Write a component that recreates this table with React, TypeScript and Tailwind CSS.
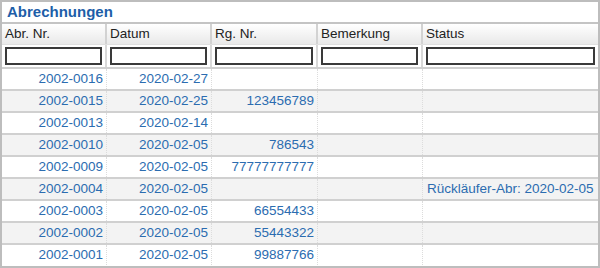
const COLS = [
  { label: "Abr. Nr.", width: "w-[105px]" },
  { label: "Datum", width: "w-[105px]" },
  { label: "Rg. Nr.", width: "w-[106px]" },
  { label: "Bemerkung", width: "w-[105px]" },
  { label: "Status", width: "flex-1" },
];

type Row = { nr: string; datum: string; rg: string; bem: string; status: string };

const ROWS: Row[] = [
  { nr: "2002-0016", datum: "2020-02-27", rg: "", bem: "", status: "" },
  { nr: "2002-0015", datum: "2020-02-25", rg: "123456789", bem: "", status: "" },
  { nr: "2002-0013", datum: "2020-02-14", rg: "", bem: "", status: "" },
  { nr: "2002-0010", datum: "2020-02-05", rg: "786543", bem: "", status: "" },
  { nr: "2002-0009", datum: "2020-02-05", rg: "77777777777", bem: "", status: "" },
  { nr: "2002-0004", datum: "2020-02-05", rg: "", bem: "", status: "Rückläufer-Abr: 2020-02-05" },
  { nr: "2002-0003", datum: "2020-02-05", rg: "66554433", bem: "", status: "" },
  { nr: "2002-0002", datum: "2020-02-05", rg: "55443322", bem: "", status: "" },
  { nr: "2002-0001", datum: "2020-02-05", rg: "99887766", bem: "", status: "" },
];

export default function App() {
  return (
    <div className="w-[600px] h-[268px] bg-white border-2 border-[#bdbdbd] overflow-hidden font-['Liberation_Sans',Arial,sans-serif] text-[13.5px]">
      <div className="h-[20px] pl-[5px] flex items-center text-[15px] font-bold text-[#1d5ea8]">Abrechnungen</div>

      <div className="flex h-[22px] border-t-2 border-[#c4c4c4] bg-gradient-to-b from-white to-[#e9e9e9] text-[#222]">
        {COLS.map((c, i) => (
          <div
            key={c.label}
            className={`${c.width} flex items-center pl-[3px] ${i < COLS.length - 1 ? "border-r-2 border-[#d2d2d2]" : ""}`}
          >
            {c.label}
          </div>
        ))}
      </div>

      <div className="flex h-[23px] items-center bg-white border-t border-[#e0e0e0]">
        {COLS.map((c, i) => (
          <div
            key={c.label}
            className={`${c.width} h-full flex items-center px-[3px] ${i < COLS.length - 1 ? "border-r-2 border-[#d8d8d8]" : ""}`}
          >
            <div className="w-full h-[18px] border-2 border-[#3a3a3a] bg-white" />
          </div>
        ))}
      </div>

      {ROWS.map((r, idx) => (
        <div
          key={r.nr}
          className={`flex h-[22px] border-t-2 border-[#d0d0d0] text-[#2b6cb0] ${idx % 2 === 1 ? "bg-[#f3f3f3]" : "bg-white"}`}
        >
          <div className="w-[105px] flex items-center justify-end pr-[3px] border-r border-dotted border-[#dcdcdc]">{r.nr}</div>
          <div className="w-[105px] flex items-center justify-end pr-[3px] border-r border-dotted border-[#dcdcdc]">{r.datum}</div>
          <div className="w-[106px] flex items-center justify-end pr-[3px] border-r border-dotted border-[#dcdcdc]">{r.rg}</div>
          <div className="w-[105px] flex items-center pl-[3px] border-r border-dotted border-[#dcdcdc]">{r.bem}</div>
          <div className="flex-1 flex items-center pl-[4px]">{r.status}</div>
        </div>
      ))}
    </div>
  );
}
